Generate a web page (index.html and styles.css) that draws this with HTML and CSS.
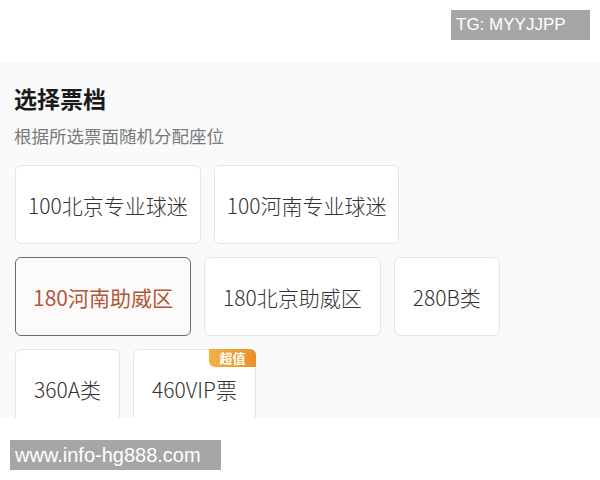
FILE: index.html
```html
<!DOCTYPE html>
<html lang="zh-CN">
<head>
<meta charset="UTF-8">
<meta name="viewport" content="width=device-width, initial-scale=1.0">
<title>选择票档</title>
<link rel="stylesheet" href="styles.css">
</head>
<body>

<div class="top"></div>

<div class="panel">
    <h2 class="title">选择票档</h2>
    <p class="sub">根据所选票面随机分配座位</p>

    <div class="options">
        <div class="row">
            <div class="opt opt-long">100北京专业球迷</div>
            <div class="opt opt-long">100河南专业球迷</div>
        </div>
        <div class="row">
            <div class="opt selected">180河南助威区</div>
            <div class="opt">180北京助威区</div>
            <div class="opt">280B类</div>
        </div>
        <div class="row">
            <div class="opt">360A类</div>
            <div class="opt">460VIP票<span class="badge">超值</span></div>
        </div>
    </div>
</div>

<div class="bottom"></div>

<div class="mark mark-tg">TG: MYYJJPP</div>
<div class="mark mark-url">www.info-hg888.com</div>

</body>
</html>
```

FILE: styles.css
```css
body {
    margin: 0;
    padding: 0;
    background-color: #fff;
    font-family: "Noto Sans CJK SC", "Noto Sans", sans-serif;
}
.top {
    height: 62px;
}
.panel {
    height: 356px;
    overflow: hidden;
    background-color: #f9fafc;
    padding: 19px 15px 0 15px;
    box-sizing: border-box;
}
.title {
    margin: 0 0 0 -1px;
    font-size: 23px;
    line-height: 34px;
    font-weight: 700;
    color: #1a1a1a;
}
.sub {
    margin: 8px 0 0 -1px;
    font-size: 17.5px;
    line-height: 26px;
    color: #7a7a7a;
}
.options {
    display: flex;
    flex-direction: column;
    gap: 13px;
    margin-top: 16px;
}
.row {
    display: flex;
    gap: 13px;
}
.opt {
    position: relative;
    height: 79px;
    padding: 0 18px;
    display: flex;
    align-items: center;
    justify-content: center;
    background-color: #fff;
    border: 1px solid #e4e5e8;
    border-radius: 6px;
    box-sizing: border-box;
    font-size: 21px;
    font-weight: 300;
    color: #333;
    white-space: nowrap;
}
.opt-long {
    padding: 0 12px;
}
.selected {
    padding: 0 17px;
    border: 1.5px solid #6a6a6a;
    background-color: #fdfbfa;
    color: #b0573c;
    font-weight: 400;
}
.badge {
    position: absolute;
    top: -1px;
    right: -1px;
    width: 47px;
    height: 18px;
    line-height: 18px;
    text-align: center;
    font-size: 13px;
    font-weight: 700;
    color: #fff;
    background: linear-gradient(90deg, #f2b244, #e8902a);
    border-radius: 0 6px 0 6px;
}
.bottom {
    height: 62px;
}
.mark {
    position: absolute;
    background-color: #a6a6a6;
    color: #fff;
    height: 30px;
    line-height: 30px;
    font-family: "Liberation Sans", Arial, sans-serif;
    box-sizing: border-box;
}
.mark-tg {
    top: 10px;
    left: 451px;
    width: 139px;
    padding-left: 5px;
    font-size: 17px;
}
.mark-url {
    top: 440px;
    left: 10px;
    width: 211px;
    padding-left: 5px;
    font-size: 20px;
}
```
